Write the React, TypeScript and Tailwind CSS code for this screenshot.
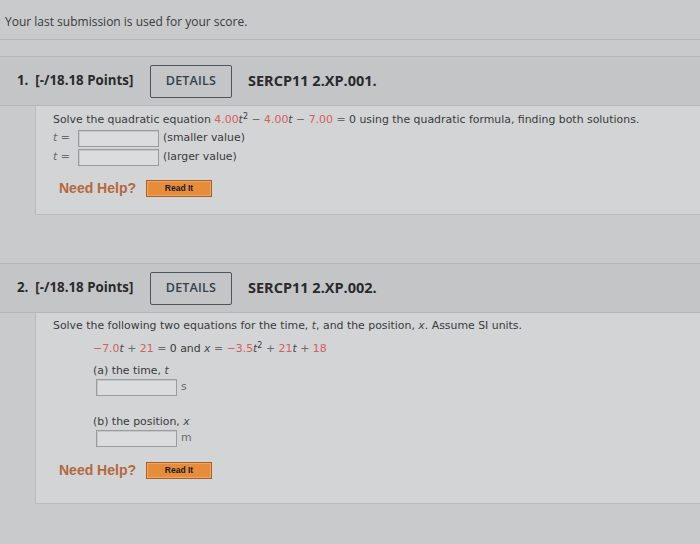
import React from "react";

const R = ({ children }: { children: React.ReactNode }) => (
  <span className="text-[#d4605a]">{children}</span>
);
const V = ({ children }: { children: React.ReactNode }) => (
  <span className="italic text-[#4a4a4a]">{children}</span>
);
const O = ({ children }: { children: React.ReactNode }) => (
  <span className="text-[#6a6a6a]">{children}</span>
);

function Header({ n, code }: { n: number; code: string }) {
  return (
    <div className="h-[50px] border-t border-b border-[#b4b6b8] bg-[#c3c5c7] flex items-center pl-[17px] font-['Open_Sans',sans-serif] text-[13.3px] font-bold text-[#2a2a2a]">
      <span className="w-[133px] whitespace-pre">{`${n}.  [-/18.18 Points]`}</span>
      <div className="w-[82px] h-[33px] border-[1.5px] border-[#4a5560] rounded-[2px] flex items-center justify-center font-semibold text-[#34414e] text-[12.5px] tracking-[0.2px]">
        DETAILS
      </div>
      <span className="ml-[16px] text-[14.5px]">{code}</span>
    </div>
  );
}

function NeedHelp() {
  return (
    <div className="flex items-center">
      <span className="font-['Liberation_Sans',Arial,sans-serif] font-bold text-[14px] text-[#b4683c] w-[87px]">
        Need Help?
      </span>
      <div className="w-[66px] h-[17px] bg-[#e58d3a] border border-[#a85e26] shadow-[inset_0_0_0_1px_#f0a860] flex items-center justify-center font-['Liberation_Sans',Arial,sans-serif] font-bold text-[8.5px] text-[#1a1a1a]">
        Read It
      </div>
    </div>
  );
}

const Input = () => (
  <div className="w-[81px] h-[17px] border border-[#9a9c9e] bg-[#dadcde] shadow-[inset_1px_1px_0_#c4c6c8]" />
);

export default function App() {
  return (
    <div className="w-[700px] h-[544px] overflow-hidden bg-[#c8cacc] text-[#333]">
      <div className="h-[40px] border-b border-[#b4b6b8] bg-[#c9cacb] pl-[5px] pt-[13px] font-['Open_Sans',sans-serif] text-[12px] text-[#3a3a3a]">
        Your last submission is used for your score.
      </div>
      <div className="h-[16px]" />
      <Header n={1} code="SERCP11 2.XP.001." />
      <div className="ml-[35px] h-[109px] bg-[#d2d4d6] border-b border-l border-[#b8babc] pl-[17px] pt-[6px] font-['DejaVu_Sans',Verdana,sans-serif] text-[10.9px] text-[#3a3a3a]">
        <div className="h-[16px]">
          Solve the quadratic equation <R>4.00</R>
          <V>t</V>
          <sup className="text-[8px]">2</sup> <O>−</O> <R>4.00</R>
          <V>t</V> <O>−</O> <R>7.00</R> <O>=</O> 0 using the quadratic formula, finding both solutions.
        </div>
        <div className="flex items-center h-[19px] mt-[1px]">
          <span className="w-[25px] text-[#6a6a6a]">
            <i>t</i> =
          </span>
          <Input />
          <span className="ml-[4px]">(smaller value)</span>
        </div>
        <div className="flex items-center h-[19px]">
          <span className="w-[25px] text-[#6a6a6a]">
            <i>t</i> =
          </span>
          <Input />
          <span className="ml-[4px]">(larger value)</span>
        </div>
        <div className="mt-[11px] pl-[6px]">
          <NeedHelp />
        </div>
      </div>
      <div className="h-[48px]" />
      <Header n={2} code="SERCP11 2.XP.002." />
      <div className="ml-[35px] h-[191px] bg-[#d2d4d6] border-b border-l border-[#b8babc] pl-[17px] pt-[5px] font-['DejaVu_Sans',Verdana,sans-serif] text-[10.9px] text-[#3a3a3a]">
        <div className="h-[16px]">
          Solve the following two equations for the time, <V>t</V>, and the position, <V>x</V>. Assume SI units.
        </div>
        <div className="pl-[40px] mt-[7px] h-[16px]">
          <R>−7.0</R>
          <V>t</V> <O>+</O> <R>21</R> <O>=</O> 0 and <V>x</V> <O>=</O> <R>−3.5</R>
          <V>t</V>
          <sup className="text-[8px]">2</sup> <O>+</O> <R>21</R>
          <V>t</V> <O>+</O> <R>18</R>
        </div>
        <div className="pl-[40px] mt-[6px] h-[16px]">
          (a) the time, <V>t</V>
        </div>
        <div className="pl-[43px] flex items-center">
          <Input />
          <span className="ml-[4px] text-[#6a6a6a]">s</span>
        </div>
        <div className="pl-[40px] mt-[18px] h-[16px]">
          (b) the position, <V>x</V>
        </div>
        <div className="pl-[43px] flex items-center">
          <Input />
          <span className="ml-[4px] text-[#6a6a6a]">m</span>
        </div>
        <div className="mt-[13px] pl-[6px]">
          <NeedHelp />
        </div>
      </div>
    </div>
  );
}
